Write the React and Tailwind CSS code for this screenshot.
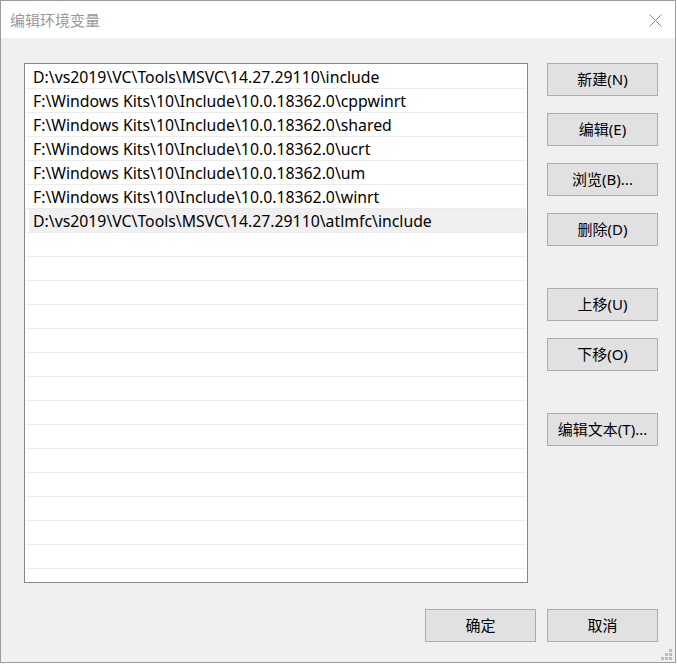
const paths = [
  'D:\\vs2019\\VC\\Tools\\MSVC\\14.27.29110\\include',
  'F:\\Windows Kits\\10\\Include\\10.0.18362.0\\cppwinrt',
  'F:\\Windows Kits\\10\\Include\\10.0.18362.0\\shared',
  'F:\\Windows Kits\\10\\Include\\10.0.18362.0\\ucrt',
  'F:\\Windows Kits\\10\\Include\\10.0.18362.0\\um',
  'F:\\Windows Kits\\10\\Include\\10.0.18362.0\\winrt',
  'D:\\vs2019\\VC\\Tools\\MSVC\\14.27.29110\\atlmfc\\include'
];

const selected = 6;

// the list fills with empty rows down to the bottom edge
const rows = [...paths, ...Array(15).fill('')];

function WinButton({ children, className = '' }) {
  return (
    <button
      type="button"
      className={`w-[111px] h-[33px] bg-[#e1e1e1] border border-[#adadad] text-[15px] text-black leading-none flex items-center justify-center ${className}`}
    >
      {children}
    </button>
  );
}

function CloseIcon() {
  return (
    <svg width="13" height="13" viewBox="0 0 13 13" className="text-[#8a8a8a]">
      <path d="M0.5 0.5 L12.5 12.5 M12.5 0.5 L0.5 12.5" stroke="currentColor" strokeWidth="1" fill="none" />
    </svg>
  );
}

function ResizeGrip() {
  const dots = [
    [8, 0],
    [4, 4],
    [8, 4],
    [0, 8],
    [4, 8],
    [8, 8]
  ];
  return (
    <svg width="11" height="11" viewBox="0 0 11 11" className="absolute right-[3px] bottom-[2px]">
      {dots.map(([x, y]) => (
        <rect key={`${x}-${y}`} x={x} y={y} width="3" height="3" fill="#bdbdbd" />
      ))}
    </svg>
  );
}

export default function App() {
  return (
    <div className="w-[677px] h-[664px] bg-white font-['Noto_Sans','Noto_Sans_CJK_SC',sans-serif]">
      <div className="relative w-[676px] h-[663px] border border-[#9c9c9c] flex flex-col bg-[#f0f0f0]">
        <header className="h-[37px] bg-white flex items-center justify-between pl-[9px] pr-[13px] pt-px shrink-0">
          <span className="text-[15px] text-[#999999] leading-none">编辑环境变量</span>
          <CloseIcon />
        </header>

        <div className="flex-1 flex flex-col pl-[23px] pr-[17px] pt-[25px]">
          <div className="flex gap-[19px]">
            <div className="w-[504px] h-[520px] border border-[#828790] bg-white overflow-hidden">
              {rows.map((text, i) => (
                <div
                  key={i}
                  className={`h-[24px] mx-px ${i > 0 ? 'border-t border-[#ececec]' : ''}`}
                >
                  <div
                    className={`h-full flex items-center pt-[3px] pl-[7px] text-[15.8px] text-black whitespace-nowrap ${i === selected ? 'bg-[#f0f0f0] ml-[3px] !pl-[4px]' : ''}`}
                  >
                    {text}
                  </div>
                </div>
              ))}
            </div>

            <div className="flex flex-col">
              <WinButton>新建(N)</WinButton>
              <WinButton className="mt-[17px]">编辑(E)</WinButton>
              <WinButton className="mt-[17px]">浏览(B)...</WinButton>
              <WinButton className="mt-[17px]">删除(D)</WinButton>
              <WinButton className="mt-[42px]">上移(U)</WinButton>
              <WinButton className="mt-[17px]">下移(O)</WinButton>
              <WinButton className="mt-[42px]">编辑文本(T)...</WinButton>
            </div>
          </div>

          <div className="flex justify-end gap-[11px] mt-[26px]">
            <WinButton>确定</WinButton>
            <WinButton>取消</WinButton>
          </div>
        </div>

        <ResizeGrip />
      </div>
    </div>
  );
}
